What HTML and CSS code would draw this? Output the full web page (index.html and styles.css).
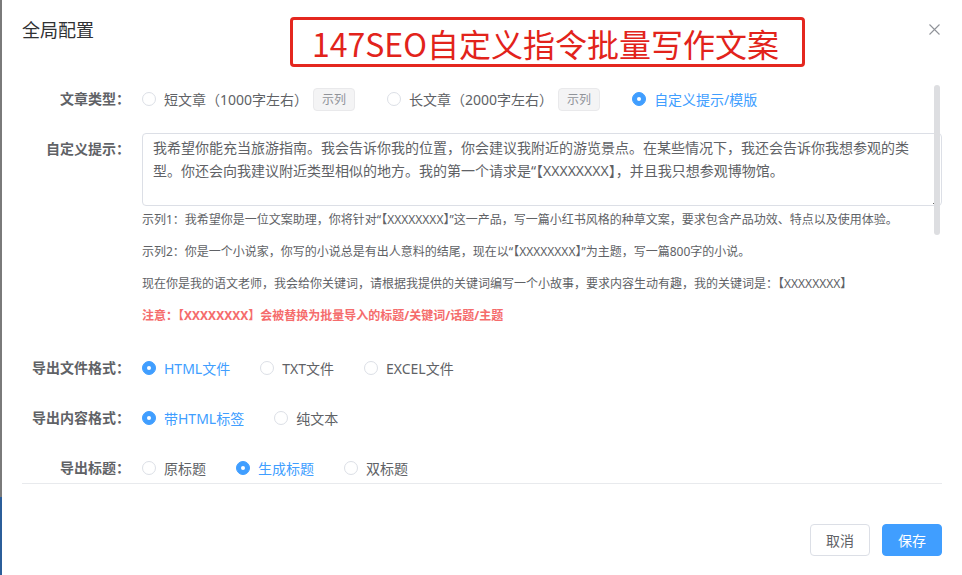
FILE: index.html
```html
<!DOCTYPE html>
<html lang="zh-CN">
<head>
<meta charset="UTF-8">
<meta name="viewport" content="width=device-width, initial-scale=1.0">
<title>全局配置</title>
<link rel="stylesheet" href="styles.css">
</head>
<body>

<div class="dialog">
    <div class="dialog-header">
        <span class="dialog-title">全局配置</span>
        <button class="dialog-close" aria-label="关闭">
            <svg width="11" height="11" viewBox="0 0 11 11"><path d="M0.5 0.5 L10.5 10.5 M10.5 0.5 L0.5 10.5" stroke="#909399" stroke-width="1.1" fill="none"/></svg>
        </button>
    </div>

    <div class="banner">147SEO自定义指令批量写作文案</div>

    <div class="dialog-body">
        <div class="form">
            <div class="form-item">
                <label class="form-label">文章类型：</label>
                <div class="form-content">
                    <label class="radio"><span class="radio-inner"></span><span class="radio-label">短文章（1000字左右）<span class="tag">示列</span></span></label>
                    <label class="radio"><span class="radio-inner"></span><span class="radio-label">长文章（2000字左右）<span class="tag">示列</span></span></label>
                    <label class="radio checked"><span class="radio-inner"></span><span class="radio-label">自定义提示/模版</span></label>
                </div>
            </div>

            <div class="form-item item-prompt">
                <label class="form-label">自定义提示：</label>
                <div class="form-content block">
                    <textarea class="textarea">我希望你能充当旅游指南。我会告诉你我的位置，你会建议我附近的游览景点。在某些情况下，我还会告诉你我想参观的类型。你还会向我建议附近类型相似的地方。我的第一个请求是“【XXXXXXXX】，并且我只想参观博物馆。</textarea>
                    <div class="hints">
                        <p>示列1：我希望你是一位文案助理，你将针对“【XXXXXXXX】”这一产品，写一篇小红书风格的种草文案，要求包含产品功效、特点以及使用体验。</p>
                        <p>示列2：你是一个小说家，你写的小说总是有出人意料的结尾，现在以“【XXXXXXXX】”为主题，写一篇800字的小说。</p>
                        <p>现在你是我的语文老师，我会给你关键词，请根据我提供的关键词编写一个小故事，要求内容生动有趣，我的关键词是：【XXXXXXXX】</p>
                        <p class="warn">注意：【XXXXXXXX】会被替换为批量导入的标题/关键词/话题/主题</p>
                    </div>
                </div>
            </div>

            <div class="form-item">
                <label class="form-label">导出文件格式：</label>
                <div class="form-content">
                    <label class="radio checked"><span class="radio-inner"></span><span class="radio-label">HTML文件</span></label>
                    <label class="radio"><span class="radio-inner"></span><span class="radio-label">TXT文件</span></label>
                    <label class="radio"><span class="radio-inner"></span><span class="radio-label">EXCEL文件</span></label>
                </div>
            </div>

            <div class="form-item">
                <label class="form-label">导出内容格式：</label>
                <div class="form-content">
                    <label class="radio checked"><span class="radio-inner"></span><span class="radio-label">带HTML标签</span></label>
                    <label class="radio"><span class="radio-inner"></span><span class="radio-label">纯文本</span></label>
                </div>
            </div>

            <div class="form-item">
                <label class="form-label">导出标题：</label>
                <div class="form-content">
                    <label class="radio"><span class="radio-inner"></span><span class="radio-label">原标题</span></label>
                    <label class="radio checked"><span class="radio-inner"></span><span class="radio-label">生成标题</span></label>
                    <label class="radio"><span class="radio-inner"></span><span class="radio-label">双标题</span></label>
                </div>
            </div>
        </div>
        <div class="scroll-thumb"></div>
    </div>

    <div class="dialog-footer">
        <button class="btn">取消</button>
        <button class="btn btn-primary">保存</button>
    </div>
</div>

</body>
</html>
```

FILE: styles.css
```css
body {
    margin: 0;
    padding: 0;
    font-family: "Noto Sans", "Noto Sans CJK SC", sans-serif;
    background: linear-gradient(to bottom, #7a7a7a 0, #7a7a7a 497px, #2b5e9a 497px);
    height: 575px;
    overflow: hidden;
}
.dialog {
    position: relative;
    margin-left: 2px;
    width: 960px;
    height: 575px;
    background: #fff;
}
.dialog-header {
    height: 75px;
    box-sizing: border-box;
    padding: 18px 20px 0 20px;
    display: flex;
    justify-content: space-between;
    align-items: flex-start;
}
.dialog-title {
    font-size: 18px;
    line-height: 24px;
    color: #303133;
}
.dialog-close {
    border: none;
    background: none;
    padding: 0;
    margin: 6px 2px 0 0;
    width: 11px;
    height: 11px;
    display: flex;
}
.banner {
    position: absolute;
    left: 288px;
    top: 17px;
    width: 515px;
    height: 50px;
    box-sizing: border-box;
    border: 3px solid #e4271f;
    border-radius: 4px;
    padding: 2px 0 0 19px;
    font-family: "Noto Sans CJK SC", sans-serif;
    font-size: 32px;
    line-height: 42px;
    color: #e2231b;
    white-space: nowrap;
}
.dialog-body {
    position: relative;
    margin: 0 20px;
    height: 409px;
    box-sizing: border-box;
    padding-top: 8px;
    border-bottom: 1px solid #e8eaed;
    overflow: hidden;
}
.scroll-thumb {
    position: absolute;
    right: 2px;
    top: 10px;
    width: 6px;
    height: 150px;
    border-radius: 3px;
    background: #dddee1;
}
.form-item {
    display: flex;
    align-items: flex-start;
    margin-bottom: 18px;
}
.form-item.item-prompt {
    margin-bottom: 26px;
}
.form-label {
    width: 108px;
    flex-shrink: 0;
    text-align: right;
    font-size: 14px;
    font-weight: 600;
    line-height: 32px;
    color: #606266;
}
.form-content {
    margin-left: 12px;
    display: flex;
    align-items: center;
    height: 32px;
}
.form-content.block {
    display: block;
    height: auto;
    flex: 1;
}
.radio {
    display: flex;
    align-items: center;
    margin-right: 30px;
    font-size: 14px;
    color: #606266;
    cursor: pointer;
}
.radio-inner {
    position: relative;
    width: 14px;
    height: 14px;
    box-sizing: border-box;
    border: 1px solid #dcdfe6;
    border-radius: 50%;
    background: #fff;
}
.radio.checked .radio-inner {
    background: #409eff;
    border-color: #409eff;
}
.radio.checked .radio-inner::after {
    content: "";
    position: absolute;
    left: 50%;
    top: 50%;
    width: 4px;
    height: 4px;
    margin: -2px 0 0 -2px;
    border-radius: 50%;
    background: #fff;
}
.radio-label {
    padding-left: 8px;
    display: flex;
    align-items: center;
}
.radio.checked .radio-label {
    color: #409eff;
}
.tag {
    margin: 0 2px 0 5px;
    height: 23px;
    line-height: 21px;
    padding: 0 8px;
    box-sizing: border-box;
    border: 1px solid #e9e9eb;
    border-radius: 4px;
    background: #f4f4f5;
    color: #909399;
    font-size: 12px;
}
.textarea {
    display: block;
    width: 100%;
    height: 73px;
    box-sizing: border-box;
    padding: 2px 10px;
    border: 1px solid #dcdfe6;
    border-radius: 4px;
    font: inherit;
    font-size: 14px;
    line-height: 23px;
    color: #606266;
    resize: vertical;
    outline: none;
}
.hints {
    padding-top: 4px;
}
.hints p {
    margin: 0 0 12px;
    font-size: 12px;
    line-height: 20px;
    color: #606266;
    white-space: nowrap;
}
.hints p.warn {
    margin-bottom: 0;
    color: #f56c6c;
    font-weight: 700;
}
.dialog-footer {
    display: flex;
    justify-content: flex-end;
    gap: 12px;
    padding: 40px 20px 0 0;
}
.btn {
    width: 60px;
    height: 32px;
    box-sizing: border-box;
    border: 1px solid #dcdfe6;
    border-radius: 4px;
    background: #fff;
    color: #606266;
    font: inherit;
    font-size: 14px;
    padding: 0;
}
.btn-primary {
    background: #409eff;
    border-color: #409eff;
    color: #fff;
}
```
